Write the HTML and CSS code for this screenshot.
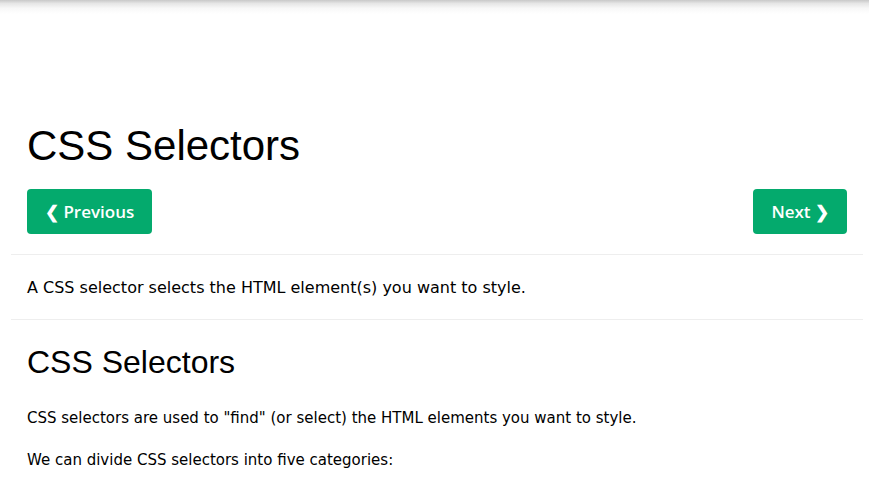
FILE: index.html
```html
<!DOCTYPE html>
<html lang="en">
<head>
<meta charset="utf-8">
<title>CSS Selectors</title>
<link rel="stylesheet" href="styles.css">
</head>
<body>
<div class="topshadow"></div>
<div class="main">
  <h1 class="title">CSS Selectors</h1>
  <div class="nav">
    <a class="btn" href="#">❮ Previous</a>
    <a class="btn" href="#">Next ❯</a>
  </div>
  <hr class="rule">
  <p class="intro">A CSS selector selects the HTML element(s) you want to style.</p>
  <hr class="rule">
  <h2 class="subtitle">CSS Selectors</h2>
  <p class="text">CSS selectors are used to "find" (or select) the HTML elements you want to style.</p>
  <p class="text">We can divide CSS selectors into five categories:</p>
</div>
</body>
</html>
```
FILE: styles.css
```css
html, body {
  margin: 0;
  padding: 0;
  background: #fff;
  overflow: hidden;
}
body {
  font-family: "DejaVu Sans", Verdana, sans-serif;
  color: #000;
}
.topshadow {
  height: 14px;
  background: linear-gradient(to bottom, #c8c8c8 0%, #e6e6e6 25%, #f8f8f8 60%, #ffffff 100%);
}
.main {
  margin-left: 11px;
  width: 852px;
  box-sizing: border-box;
  padding: 0 16px;
}
.title {
  font-family: "Liberation Sans", Arial, sans-serif;
  font-size: 42px;
  font-weight: normal;
  line-height: 48px;
  margin: 108px 0 19px;
}
.nav {
  display: flex;
  justify-content: space-between;
}
.btn {
  display: flex;
  align-items: center;
  height: 45px;
  padding: 0 18px;
  background: #04AA6D;
  color: #fff;
  border-radius: 4px;
  text-decoration: none;
  font-family: "Open Sans", sans-serif;
  font-weight: 600;
  font-size: 17px;
}
.rule {
  border: 0;
  border-top: 1px solid #eee;
  margin: 20px -16px;
}
.intro {
  font-size: 16px;
  line-height: 24px;
  margin: 0;
  padding: 1px 0 0;
  height: 23px;
}
.subtitle {
  font-family: "Liberation Sans", Arial, sans-serif;
  font-size: 32px;
  font-weight: normal;
  margin: 24px 0 26px;
}
.text {
  font-family: "DejaVu Sans", sans-serif;
  font-size: 15px;
  line-height: 22px;
  margin: 20px 0;
}
```
